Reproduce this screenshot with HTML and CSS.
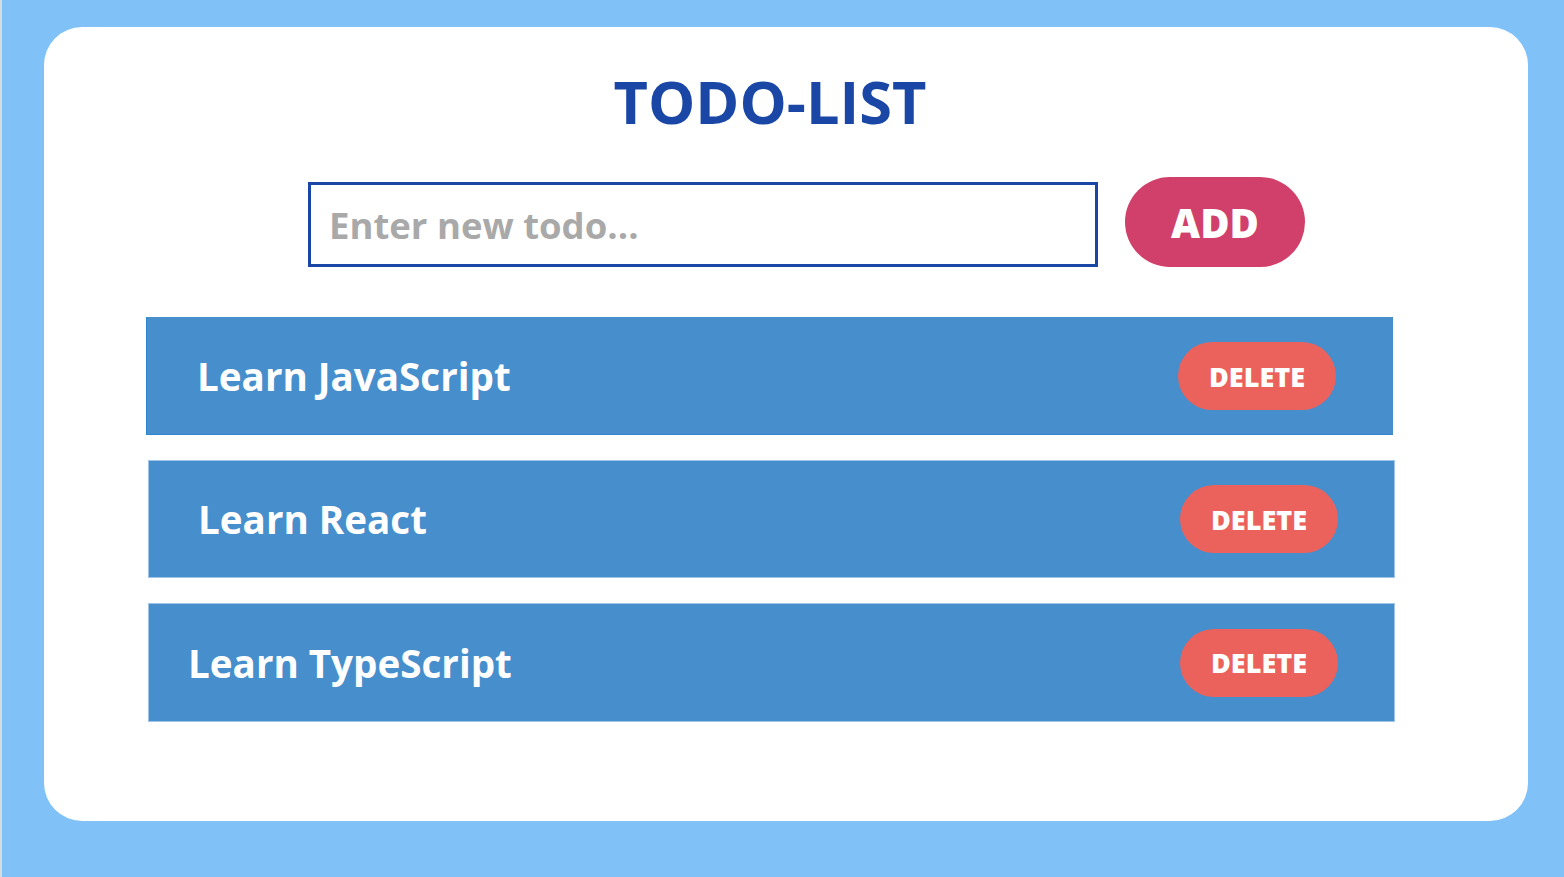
FILE: index.html
```html
<!DOCTYPE html>
<html lang="en">
<head>
<meta charset="utf-8">
<title>TODO-LIST</title>
<link rel="stylesheet" href="styles.css">
</head>
<body>
<main class="card">
  <h1 class="title">TODO-LIST</h1>
  <form class="add-form">
    <input class="add-input" type="text" placeholder="Enter new todo...">
    <button class="add-btn" type="button">ADD</button>
  </form>
  <ul class="todos">
    <li class="todo todo--first">
      <span class="todo-text">Learn JavaScript</span>
      <button class="del-btn" type="button">DELETE</button>
    </li>
    <li class="todo">
      <span class="todo-text">Learn React</span>
      <button class="del-btn" type="button">DELETE</button>
    </li>
    <li class="todo todo--tight">
      <span class="todo-text">Learn TypeScript</span>
      <button class="del-btn" type="button">DELETE</button>
    </li>
  </ul>
</main>
</body>
</html>
```

FILE: styles.css
```css
* { box-sizing: border-box; }

html, body {
  margin: 0;
  padding: 0;
}

body {
  width: 1564px;
  height: 877px;
  overflow: hidden;
  background: #80c2f8;
  border-left: 2px solid #d3dbe3;
  font-family: "Open Sans", "Liberation Sans", sans-serif;
  padding-top: 27px;
  padding-left: 42px;
}

.card {
  width: 1484px;
  height: 794px;
  background: #ffffff;
  border-radius: 38px;
  padding-top: 33px;
  padding-left: 102px;
}

.title {
  margin: 0;
  width: 1248px;
  text-align: center;
  font-size: 59.5px;
  font-weight: 700;
  line-height: 82px;
  color: #1a47a6;
}

.add-form {
  display: flex;
  align-items: flex-end;
  gap: 27px;
  margin: 35px 0 0 162px;
}

.add-input {
  width: 790px;
  height: 85px;
  border: 3px solid #1a47a6;
  border-radius: 0;
  padding: 0 18px;
  font-family: inherit;
  font-size: 36.5px;
  font-weight: 700;
  color: #333;
  outline: none;
}

.add-input::placeholder {
  color: #a9a9a9;
  opacity: 1;
}

.add-btn {
  width: 180px;
  height: 90px;
  border: none;
  border-radius: 45px;
  background: #d0406a;
  color: #ffffff;
  font-family: inherit;
  font-size: 40px;
  font-weight: 800;
  padding: 0;
}

.todos {
  list-style: none;
  margin: 50px 0 0 0;
  padding: 0;
  display: flex;
  flex-direction: column;
  gap: 25px;
}

.todo {
  width: 1247px;
  height: 118px;
  margin-left: 2px;
  background: #468fcc;
  border: 1px solid #9fc5e8;
  display: flex;
  align-items: center;
  justify-content: space-between;
  padding: 0 56px 0 49px;
}

.todo--first {
  margin-left: 0;
  border-color: #468fcc #468fcc #2c86d2 #2c86d2;
  padding-left: 50px;
}

.todo--tight {
  height: 119px;
  padding-left: 39px;
}

.todo-text {
  color: #ffffff;
  font-size: 38.6px;
  font-weight: 700;
}

.del-btn {
  width: 158px;
  height: 68px;
  border: none;
  border-radius: 34px;
  background: #eb625d;
  color: #ffffff;
  font-family: inherit;
  font-size: 27px;
  font-weight: 800;
  padding: 0;
}
```
